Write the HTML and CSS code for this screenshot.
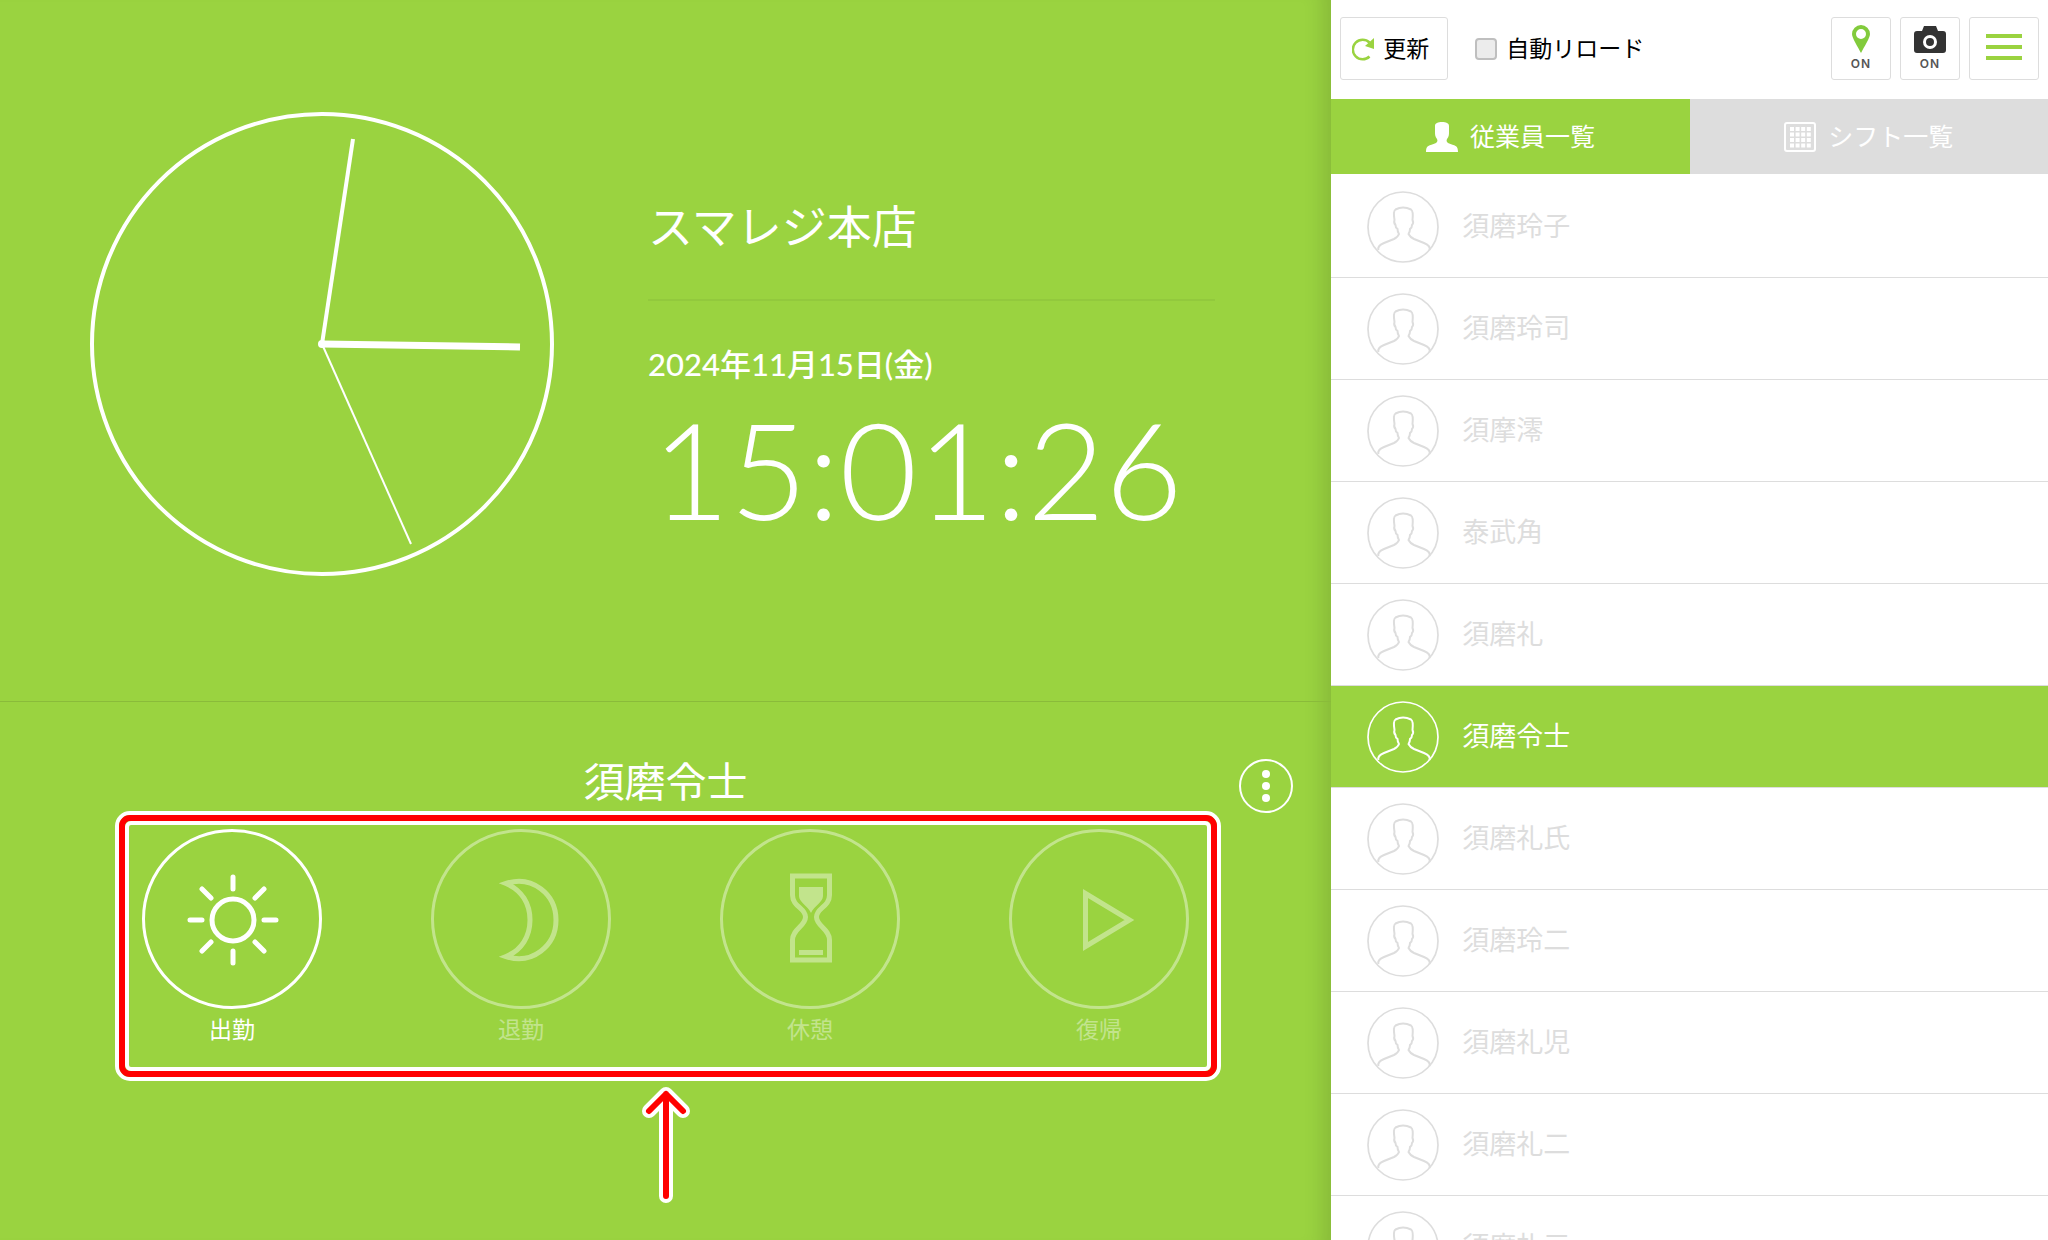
FILE: index.html
```html
<!DOCTYPE html>
<html lang="ja">
<head>
  <meta charset="UTF-8">
  <meta name="viewport" content="width=device-width, initial-scale=1.0">
  <title>スマレジ・タイムカード</title>
  <link rel="stylesheet" href="styles.css">
</head>
<body>
  <!-- アイコン定義 -->
  <svg class="defs" aria-hidden="true">
    <symbol id="person" viewBox="0 0 72 72">
      <circle cx="36" cy="36" r="35" fill="none" stroke="currentColor" stroke-width="1.7"/>
      <path d="M11.500 59Q10 55 17 52L27 48Q31 46 32 43Q30.500 41 30.500 38Q28.500 37 28.500 34Q26.500 32 27.500 29Q26 20 28.500 18.500Q36 14.500 44 18.500Q46.500 20 45.500 29Q47 32 45 34Q45 37 43 38Q43 41 41.500 43Q43 46 47 48L57 52Q64 55 62.500 59" fill="none" stroke="currentColor" stroke-width="2" stroke-linejoin="round"/>
    </symbol>
  </svg>

  <div class="app">
    <main class="stage">
      <section class="clock-area">
        <svg class="clock" viewBox="0 0 464 464" role="img" aria-label="時計">
          <circle cx="232" cy="232" r="230" fill="none" stroke="#fff" stroke-width="4"/>
          <line x1="232" y1="232" x2="263" y2="27" stroke="#fff" stroke-width="4"/>
          <line x1="232" y1="232" x2="430" y2="235" stroke="#fff" stroke-width="7"/>
          <line x1="232" y1="232" x2="321" y2="432" stroke="#fff" stroke-width="2"/>
          <circle cx="232" cy="232" r="4" fill="#fff"/>
        </svg>
        <div class="info">
          <h1 class="store">スマレジ本店</h1>
          <p class="date">2024年11月15日(金)</p>
          <p class="time">15:01:26</p>
        </div>
      </section>

      <section class="punch-area">
        <h2 class="staff-name">須磨令士</h2>
        <button type="button" class="more" aria-label="メニュー">
          <svg viewBox="0 0 54 54"><circle cx="27" cy="27" r="26" fill="none" stroke="#fff" stroke-width="2"/><circle cx="27" cy="15" r="4"/><circle cx="27" cy="27" r="4"/><circle cx="27" cy="39" r="4"/></svg>
        </button>
        <div class="punch-row">
          <button type="button" class="punch">
            <svg viewBox="0 0 180 180">
              <circle cx="90" cy="90" r="88.500" stroke-width="3"/>
              <circle cx="91" cy="91" r="21" stroke-width="5"/>
              <path d="M91 48v12M91 122v12M48 91h12M122 91h12M60 60l9 9M122 60l-9 9M60 122l9-9M122 122l-9-9" stroke-width="5" stroke-linecap="round"/>
            </svg>
            出勤
          </button>
          <button type="button" class="punch" disabled>
            <svg viewBox="0 0 180 180">
              <circle cx="90" cy="90" r="88.500" stroke-width="3"/>
              <path d="M75 54.500C101 46 125 65 125 91S101 136 75 127.500C91 121 99 107 99 91S91 61 75 54.500Z" stroke-width="5"/>
            </svg>
            退勤
          </button>
          <button type="button" class="punch" disabled>
            <svg viewBox="0 0 180 180">
              <circle cx="90" cy="90" r="88.500" stroke-width="3"/>
              <path d="M72.500 47h37v19c0 12-13 13-13 22s13 12 13 23v20h-37v-20c0-11 13-14 13-23s-13-10-13-22z" stroke-width="5"/>
              <path class="sand" d="M79 58h24v9c0 6-9 10-12 17c-3-7-12-11-12-17zM79 121h24v5H79z"/>
            </svg>
            休憩
          </button>
          <button type="button" class="punch" disabled>
            <svg viewBox="0 0 180 180">
              <circle cx="90" cy="90" r="88.500" stroke-width="3"/>
              <path d="M76.500 64.500v53l44-26.500z" stroke-width="5"/>
            </svg>
            復帰
          </button>
          <div class="callout"></div>
        </div>
        <svg class="arrow" viewBox="0 0 48 116" aria-hidden="true">
          <path d="M24 109V7M7 24L24 7L41 24" stroke="#fff" stroke-width="14"/>
          <path d="M24 109V7M7 24L24 7L41 24" stroke="#f00" stroke-width="6"/>
        </svg>
      </section>
    </main>

    <aside class="side">
      <header class="toolbar">
        <button type="button" class="tool refresh">
          <svg width="24" height="24" viewBox="0 0 24 24"><path d="M17.500 5.500A9.800 9.800 0 1 0 17.500 19.500" fill="none" stroke="#9ad340" stroke-width="2.5"/><path d="M22 1v11l-9-3z" fill="#9ad340"/></svg>
          更新
        </button>
        <label class="auto"><input type="checkbox">自動リロード</label>
        <button type="button" class="tool state">
          <svg width="20" height="30" viewBox="0 0 20 30"><path d="M10 1a9 9 0 0 0-9 9c0 4 6 13 9 19c3-6 9-15 9-19a9 9 0 0 0-9-9zm0 4a5 5 0 1 1 0 10a5 5 0 0 1 0-10z" fill="#82cb3c" fill-rule="evenodd"/></svg>
          ON
        </button>
        <button type="button" class="tool state">
          <svg width="34" height="30" viewBox="0 0 34 30"><path d="M11 2h12l2 5h5a3 3 0 0 1 3 3v16a3 3 0 0 1-3 3H4a3 3 0 0 1-3-3V10a3 3 0 0 1 3-3h5z" fill="#333"/><circle cx="17" cy="18" r="5.500" fill="none" stroke="#fff" stroke-width="3"/></svg>
          ON
        </button>
        <button type="button" class="tool menu" aria-label="メニュー"><span></span><span></span><span></span></button>
      </header>

      <nav class="tabs">
        <a href="#staff" class="tab active">
          <svg width="32" height="30" viewBox="0 0 32 30"><path d="M0 30c0-7 3-6 10-9c1-1 2-2 1-4c-2-2-2-5-2-7V4c0-3 3-4 7-4s7 1 7 4v6c0 2 0 5-2 7c-1 2 0 3 1 4c7 3 10 2 10 9z" fill="#fff"/></svg>
          従業員一覧
        </a>
        <a href="#shift" class="tab">
          <svg width="32" height="30" viewBox="0 0 32 30"><rect x="1" y="1" width="30" height="28" rx="2" fill="none" stroke="#fff" stroke-width="2"/><path d="M6 7h21M6 12.500h21M6 18h21M6 23.500h21" stroke="#fff" stroke-width="4" stroke-dasharray="4 1.600"/></svg>
          シフト一覧
        </a>
      </nav>

      <ul class="staff-list">
        <li><svg class="avatar"><use href="#person"/></svg>須磨玲子</li>
        <li><svg class="avatar"><use href="#person"/></svg>須磨玲司</li>
        <li><svg class="avatar"><use href="#person"/></svg>須摩澪</li>
        <li><svg class="avatar"><use href="#person"/></svg>泰武角</li>
        <li><svg class="avatar"><use href="#person"/></svg>須磨礼</li>
        <li class="selected"><svg class="avatar"><use href="#person"/></svg>須磨令士</li>
        <li><svg class="avatar"><use href="#person"/></svg>須磨礼氏</li>
        <li><svg class="avatar"><use href="#person"/></svg>須磨玲二</li>
        <li><svg class="avatar"><use href="#person"/></svg>須磨礼児</li>
        <li><svg class="avatar"><use href="#person"/></svg>須磨礼二</li>
        <li><svg class="avatar"><use href="#person"/></svg>須磨礼三</li>
      </ul>
    </aside>
  </div>
</body>
</html>
```
FILE: styles.css
```css
* { box-sizing: border-box; margin: 0; padding: 0; }
body {
  font-family: Lato, "Noto Sans CJK JP", sans-serif;
  line-height: 1.5;
  background: #9ad340;
  color: #fff;
}
button {
  font: inherit;
  color: inherit;
  background: none;
  border: none;
  cursor: pointer;
}
.defs { position: absolute; width: 0; height: 0; }
.app {
  display: flex;
  height: 100vh;
  overflow: hidden;
}

/* 左側：時計と打刻 */
.stage {
  width: 65%;
  display: flex;
  flex-direction: column;
  box-shadow: inset -24px 0 20px -16px rgba(0,0,0,0.12);
}
.clock-area {
  display: flex;
  align-items: center;
  padding: 112px 116px 125px 90px;
  gap: 94px;
  border-bottom: 1px solid #8abb3a;
}
.clock {
  width: 42%;
  max-width: 464px;
  flex-shrink: 0;
}
.info {
  flex: 1;
  padding-top: 58px;
}
.store {
  font-size: 45px;
  font-weight: 400;
  line-height: 60px;
  padding-bottom: 42px;
  border-bottom: 2px solid #92c93d;
  margin-bottom: 38px;
}
.date {
  font-size: 31px;
  font-weight: 500;
  line-height: 50px;
}
.time {
  font-size: 134px;
  font-weight: 300;
  line-height: 160px;
  padding-left: 4px;
}
.punch-area {
  position: relative;
  flex: 1;
  display: flex;
  flex-direction: column;
  align-items: center;
  padding-top: 50px;
}
.staff-name {
  font-size: 41px;
  font-weight: 400;
  line-height: 60px;
  margin-bottom: 17px;
}
.more {
  position: absolute;
  top: 57px;
  right: 38px;
  width: 54px;
  height: 54px;
}
.more svg { display: block; fill: #fff; }
.punch-row {
  position: relative;
  width: 79%;
  max-width: 1047px;
  display: flex;
  justify-content: space-between;
}
.punch {
  width: 180px;
  font-size: 23px;
  line-height: 40px;
}
.punch svg {
  display: block;
  width: 100%;
  fill: none;
  stroke: #fff;
}
.punch .sand { fill: #fff; stroke: none; }
.punch:disabled { opacity: 0.4; cursor: default; }
.callout {
  position: absolute;
  top: -18px;
  bottom: -32px;
  left: -27px;
  right: -32px;
  border: 4px solid #fff;
  border-radius: 15px;
  pointer-events: none;
}
.callout::before {
  content: "";
  position: absolute;
  inset: 0;
  border: 6px solid #f00;
  border-radius: 11px;
}
.callout::after {
  content: "";
  position: absolute;
  inset: 6px;
  border: 4px solid #fff;
  border-radius: 6px;
}
.arrow {
  width: 48px;
  height: 116px;
  margin-top: 38px;
  fill: none;
  stroke-linecap: round;
  stroke-linejoin: round;
}

/* 右側：従業員一覧 */
.side {
  flex: 1;
  background: #fff;
  color: #000;
}
.toolbar {
  display: flex;
  align-items: flex-start;
  gap: 9px;
  height: 99px;
  padding: 17px 9px 0;
}
.tool {
  height: 63px;
  border: 1px solid #ddd;
  border-radius: 3px;
}
.refresh {
  display: flex;
  align-items: center;
  gap: 7px;
  width: 108px;
  padding-left: 11px;
  font-size: 23px;
}
.auto {
  display: flex;
  align-items: center;
  gap: 9px;
  height: 63px;
  margin-left: 18px;
  margin-right: auto;
  font-size: 23px;
}
.auto input {
  appearance: none;
  width: 22px;
  height: 22px;
  border: 2px solid #bfbfbf;
  border-radius: 4px;
  background: #ececec;
}
.state {
  display: flex;
  flex-direction: column;
  align-items: center;
  width: 60px;
  padding-top: 6px;
  font-family: Inter, sans-serif;
  font-size: 12px;
  font-weight: 600;
  line-height: 20px;
  letter-spacing: 1px;
  color: #555;
}
.menu {
  display: flex;
  flex-direction: column;
  align-items: center;
  justify-content: center;
  gap: 7px;
  width: 70px;
  padding-bottom: 4px;
}
.menu span {
  width: 36px;
  height: 4px;
  background: #9ad340;
}
.tabs { display: flex; }
.tab {
  flex: 1;
  display: flex;
  align-items: center;
  justify-content: center;
  gap: 12px;
  height: 75px;
  font-size: 25px;
  color: #fff;
  background: #ddd;
  text-decoration: none;
}
.tab.active { background: #9ad340; }
.staff-list {
  list-style: none;
  padding-top: 2px;
}
.staff-list li {
  display: flex;
  align-items: center;
  gap: 23px;
  height: 102px;
  padding-left: 36px;
  border-bottom: 1px solid #ddd;
  font-size: 27px;
  color: #ddd;
}
.staff-list .selected {
  background: #9ad340;
  color: #fff;
}
.avatar {
  width: 72px;
  height: 72px;
}
```
